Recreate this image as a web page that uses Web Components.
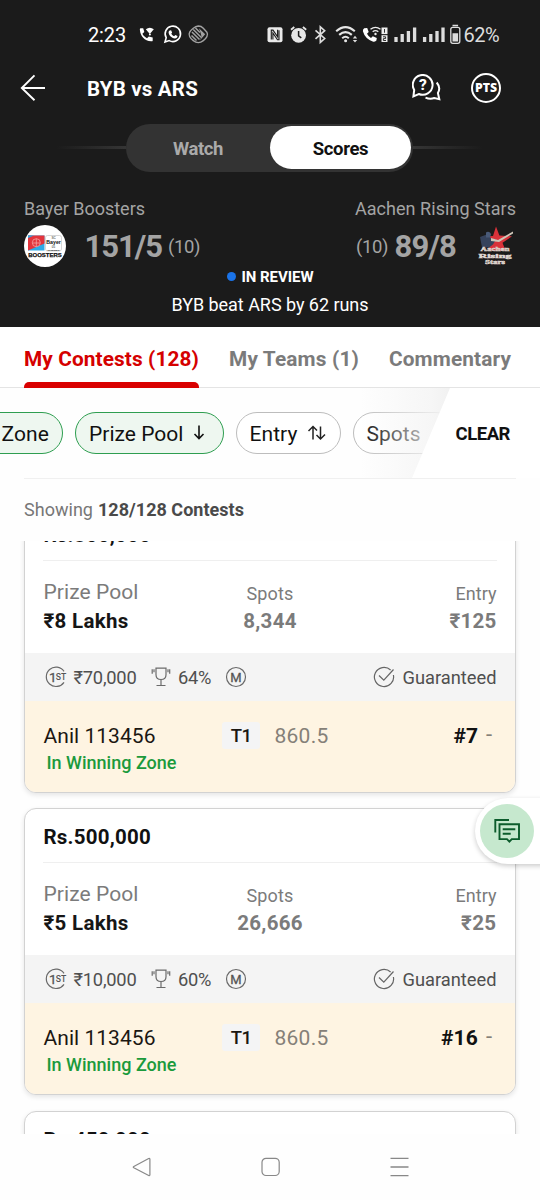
<!DOCTYPE html>
<html lang="en">
<head>
<meta charset="utf-8">
<title>BYB vs ARS</title>
<style>
html,body{margin:0;background:#fff}
body{width:540px;height:1200px;overflow:hidden;font-family:Roboto,"Liberation Sans",sans-serif;color:#111}
</style>
</head>
<body>
<contest-screen></contest-screen>

<template id="screen">
<style>
:host{display:flex;flex-direction:column;width:540px;height:1200px;position:relative;overflow:hidden;background:#fefefe}
.dark{background:#1b1b1b;height:327px;flex:none}
</style>
<div class="dark">
<status-bar></status-bar>
<match-header></match-header>
<view-toggle></view-toggle>
<match-score></match-score>
</div>
<tab-row></tab-row>
<filter-row></filter-row>
<contest-list></contest-list>
<system-nav></system-nav>
<chat-fab></chat-fab>
</template>

<template id="status">
<style>
:host{display:flex;align-items:center;height:60px;padding:10px 0 0 88px;box-sizing:border-box;color:#fff}
svg{display:block;flex:none}
</style>
<fit-text w="38" style="font-size:20px">2:23</fit-text>
<svg width="370" height="34" viewBox="132 18 370 34" style="margin-left:6px;margin-right:-40px">
<g fill="#fff">
<path d="M140.500 28.300h2.700l1.100 3.800-1.900 1.700c1 2 2.500 3.500 4.600 4.400l1.800-1.800 3.900 1v3.300c-.2.6-.7.7-1.600.6-6.600-.5-10.700-5-11.200-11.300-.1-1 .1-1.500.6-1.700z"/>
<path d="M145.800 29.300q4-3.200 8 0l-4 4.800z"/><circle cx="149.900" cy="34.500" r="1"/>
</g>
<path d="M165 42l1.200-4.300a7.700 7.700 0 1 1 3 2.900z" fill="none" stroke="#fff" stroke-width="1.600"/>
<path d="M169.600 30.400l1.500-.2 1 2.300-.8 1.200c.7 1.200 1.600 1.900 2.800 2.500l1.200-1.200 2.200 1.100c0 1.600-1 2.500-2.600 2.500-3.400-.4-6.500-3.600-6.300-6.500.1-.8.4-1.400 1-1.700z" fill="#fff"/>
<g fill="none" stroke="#a2a2a2"><path d="M198.300 26q3 0 5 2.200t3.600 4q1.200 2.200 0 4.400t-3.600 4q-2.500 2-5 2t-5-2-3.600-4q-1.200-2.200 0-4.400t3.600-4 5-2.200z" stroke-width="1.400"/>
<path d="M192 32l7.500 7.500M193.300 29.500l8 8M195.500 28l4.500 4.500M191.500 35.500l5 5" stroke-width="1.500"/><path d="M199 28.300l6.200 6-5.200 6 1.500-3.800-1-4z" fill="#a2a2a2" stroke="none"/></g>
<path d="M269.500 27.200h11a2 2 0 0 1 2 2v11a2 2 0 0 1-2 2h-11a2 2 0 0 1-2-2v-11a2 2 0 0 1 2-2z" fill="#eaeaea"/>
<path d="M271.300 39.500v-9.400h1.700l4.600 6.700v-7M279 30.300v9.400h-1.500l-4.600-6.700v6.500" fill="none" stroke="#1b1b1b" stroke-width="1.100"/>
<circle cx="298.600" cy="35.300" r="7.400" fill="#e6e6e6"/><path d="M298.600 31v4.800l2.700 2" stroke="#1b1b1b" stroke-width="1.500" fill="none"/><path d="M291 29.800l3.300-2.800M306.200 29.800l-3.300-2.800" stroke="#e6e6e6" stroke-width="1.800"/>
<path d="M315.500 30.300l9.200 8.200-4.400 3.900v-15.600l4.400 3.900-9.200 8.200" fill="none" stroke="#ddd" stroke-width="1.600"/>
<g fill="none" stroke="#e6e6e6" stroke-width="2.100"><path d="M336.200 31.200q9.300-8.300 18.600 0"/><path d="M339.200 34.900q6.300-5.600 12.600 0"/><path d="M342.200 38.200q3.300-2.900 6.600 0"/></g><circle cx="345.600" cy="40.800" r="1.500" fill="#e6e6e6"/><path d="M352.800 38.500l2.200-2.700 2.200 2.700zM352.800 39.900l2.200 2.600 2.200-2.600z" fill="#ddd"/>
<path d="M364.200 28.200l3-.3 1.500 4.100-1.700 1.700q1.400 2.700 4 4.200l1.800-1.700 4 1.700-.4 2.700q-1 1.500-3.700.9-7.600-2.600-9.800-10.200-.2-2.200 1.300-3.100z" fill="#fff"/>
<g fill="none" stroke="#eee" stroke-width="1.400"><path d="M370.500 29.300q5-3.800 10 0M372.700 31.700q2.800-2.200 5.600 0"/></g><circle cx="375.500" cy="34" r="1.200" fill="#eee"/>
<rect x="381.500" y="27.500" width="6" height="6.600" fill="#eee"/><rect x="381.500" y="35.200" width="6" height="6.800" fill="#eee"/><path d="M384.500 29v3.700M383 36.800h2.600v1.800h-2.200v1.900h2.600" fill="none" stroke="#1b1b1b" stroke-width=".9"/>
<path d="M396 42v-5M402.200 42v-8M408.400 42v-11M414.600 42v-14.500M424.600 42v-5M430.800 42v-8M437 42v-11M443 42v-14.500" stroke="#ddd" stroke-width="3.300"/>
<rect x="450.800" y="27.300" width="9" height="16" rx="2" fill="none" stroke="#ddd" stroke-width="1.300"/><path d="M452.500 24.700h5.600v1.600h-5.600zM452.500 33.300h5.600v8.300h-5.600z" fill="#ddd"/>
</svg>
<fit-text w="35.500" style="font-size:20px;color:#ddd;margin-left:1.500px">62%</fit-text>
</template>

<template id="header">
<style>
:host{display:flex;align-items:center;height:56px;padding:0 38px 0 20px;color:#fff}
svg{display:block;flex:none}
fit-text{margin:1px 0 0 41px;flex:1}
</style>
<svg width="26" height="28" viewBox="0 0 26 28" fill="none" stroke="#fff" stroke-width="1.900"><path d="M25 14H2M14.500 1.300L1.800 14l12.700 12.300"/></svg>
<fit-text w="111" style="font-size:20.500px;font-weight:700">BYB vs ARS</fit-text>
<svg width="30" height="28" viewBox="412.500 74 30 28" fill="none" stroke="#fff" stroke-width="2"><path d="M414.700 90A9.900 9.900 0 1 1 419.300 94L413.900 96.300z"/><path d="M437.200 82.500q4.400 5.300 1.200 10.500l1.400 6.200-5-1.200q-4.300 1.600-8.800-.4" /><text x="423.400" y="90.200" text-anchor="middle" font-size="15.500" font-weight="800" fill="#fff" stroke="none">?</text></svg>
<svg width="32" height="32" viewBox="0 0 32 32" style="margin-left:28px"><circle cx="16" cy="16" r="14" fill="none" stroke="#fff" stroke-width="2"/><text x="16" y="20.300" text-anchor="middle" font-family="Open Sans,sans-serif" font-size="12" font-weight="800" fill="#fff" textLength="22" lengthAdjust="spacingAndGlyphs">PTS</text></svg>
</template>

<template id="toggle">
<style>
:host{display:flex;align-items:center;height:48px;padding:0 56px;margin-top:7.500px}
i{height:3px;width:70px;background:linear-gradient(90deg,#1b1b1b,#353535)}
i:last-child{transform:scaleX(-1)}
.pill{display:flex;width:287px;height:48px;box-sizing:border-box;border-radius:24px;background:#333;padding:2.500px;flex:none}
.pill div{flex:1;display:flex;align-items:center;justify-content:center;color:#aaa;border-radius:22px;font-size:18.500px;padding-top:2px;box-sizing:border-box}
.pill .on{background:#fff;color:#111}
</style>
<i></i><div class="pill"><div><fit-text w="50" style="font-weight:700;margin-right:2px">Watch</fit-text></div><div class="on"><fit-text w="55.500" style="font-weight:700;margin-left:1px">Scores</fit-text></div></div><i></i>
</template>

<template id="score">
<style>
:host{display:block;color:#a4a4a4;padding:26px 24px 0}
.row{display:flex;justify-content:space-between;align-items:center}
.names{height:22px;font-size:18px}
.pts{height:42px;margin-top:5px}
.side{display:flex;align-items:center}
.big{font-size:31px;font-weight:700;margin-top:2px}
.small{font-size:18.500px;margin-top:3px}
svg{display:block;flex:none}
.rev{display:flex;align-items:center;justify-content:center;height:20px;color:#fff;font-size:15px;font-weight:700}
.rev i{width:9px;height:9px;border-radius:50%;background:#1a73e8;margin-right:6px}
.res{display:flex;justify-content:center;color:#fff;font-size:18px;line-height:20px;margin-top:8px}
</style>
<div class="row names"><fit-text w="121">Bayer Boosters</fit-text><fit-text w="161">Aachen Rising Stars</fit-text></div>
<div class="row pts">
<div class="side">
<svg width="42" height="42" viewBox="0 0 42 42"><circle cx="21" cy="21" r="21" fill="#fff"/><path d="M4 10.500h16.500v15H4z" fill="#2ea9e6"/><path d="M4 10.500h16.500v8L4 25.500z" fill="#e3343c"/><path d="M4 10.500h6L4 13z" fill="#2ea9e6"/><g fill="none" stroke="#f6b0b0" stroke-width=".7"><circle cx="12.300" cy="17.700" r="4"/><path d="M12.300 13.700v8M8.500 18h7.600"/></g><rect x="21.500" y="10.500" width="16" height="15.500" rx="2" fill="#fff" stroke="#bbb" stroke-width=".6"/><g font-family="Liberation Sans,sans-serif" fill="#111" text-anchor="middle"><text x="29.500" y="14" font-size="3">SC</text><text x="29.600" y="19.200" font-size="4.900" font-weight="700" textLength="14.500" lengthAdjust="spacingAndGlyphs">Bayer</text><text x="29.500" y="23" font-size="3">05</text><text x="29.500" y="25.900" font-size="2.400" font-weight="700">Uerdingen</text><text x="21" y="32" font-size="5.800" font-weight="700" stroke="#111" stroke-width=".25" textLength="33.500" lengthAdjust="spacingAndGlyphs">BOOSTERS</text></g></svg>
<fit-text class="big" w="77.500" style="margin-left:18.500px">151/5</fit-text><fit-text class="small" w="32" style="margin-left:6px">(10)</fit-text>
</div>
<div class="side">
<fit-text class="small" w="32">(10)</fit-text><fit-text class="big" w="61.500" style="margin-left:6.500px">89/8</fit-text>
<svg width="38" height="42" viewBox="0 0 38 42" style="margin-left:21px;margin-right:1px"><path d="M19 1.500l3.400 9 12.600.8-9.500 6.500 3 7.700H11.500l2.500-8-9-6 11-.6z" fill="#d9323a"/><path d="M3 12l8-3 3 4.500 5 1-3 5-4 3H5z" fill="#36435c"/><path d="M14 13l7 2 15-8.500v2L22 17l-8-1z" fill="#cfc6b8"/><path d="M9 7.500a3 3 0 0 1 5 2l-1 3h-4z" fill="#495a78"/><g font-family="Liberation Serif,serif" font-weight="700" text-anchor="middle" fill="#bfb3a7" stroke="#e6ded8" stroke-width=".4"><text x="18" y="25.500" font-size="6.700" textLength="29" lengthAdjust="spacingAndGlyphs">Aachen</text><text x="18" y="33" font-size="6.600" textLength="33" lengthAdjust="spacingAndGlyphs" fill="#ddd4cd">Rising</text><text x="18" y="39.400" font-size="5.400" textLength="20" lengthAdjust="spacingAndGlyphs">Stars</text></g></svg>
</div>
</div>
<div class="rev"><i></i><fit-text w="72">IN REVIEW</fit-text></div>
<div class="res"><fit-text w="197">BYB beat ARS by 62 runs</fit-text></div>
</template>

<template id="tabs">
<style>
:host{display:flex;flex:none;height:61px;box-sizing:border-box;border-bottom:1px solid #e4e4e4;padding:0 24px;gap:30px;background:#fff;font-size:20.800px;font-weight:700;color:#7b7b7b;align-items:stretch}
div{display:flex;align-items:center;height:61px;position:relative}
fit-text{margin-top:2px}
.on{color:#d50000}
.on::after{content:"";position:absolute;left:0;right:0;bottom:0;height:6.500px;background:#d90000;border-radius:5px 5px 0 0}
</style>
<div class="on"><fit-text w="175">My Contests (128)</fit-text></div><div><fit-text w="130">My Teams (1)</fit-text></div><div><fit-text w="122">Commentary</fit-text></div>
</template>

<template id="filters">
<style>
:host{display:block;flex:none;height:153px;position:relative;background:#fefefe}
.chips{display:flex;align-items:center;gap:12px;height:89px;margin-left:-44px;overflow:hidden;font-size:21px}
.chip{display:flex;align-items:center;height:42px;box-sizing:border-box;border:1.500px solid #bdbdbd;border-radius:21px;background:#fff;flex:none;padding:2px 13px 0}
.chip.on{background:#eef7f0;border-color:#2e9e50}
svg{display:block;flex:none;margin-top:-2px}
.clear{position:absolute;top:0;left:410px;width:130px;height:90px;display:flex;align-items:center;background:#fff;clip-path:polygon(40px 0,100% 0,100% 100%,2px 100%);padding:1px 0 0 45.500px;box-sizing:border-box;font-size:18.500px;font-weight:700}
.fade{position:absolute;top:0;left:360px;width:95px;height:90px;background:linear-gradient(90deg,rgba(252,252,252,0),rgba(244,244,244,.8) 75%,#f0f0f0)}
.line{position:absolute;left:24px;right:24px;top:90px;height:1px;background:#f0f0f0}
.show{display:flex;padding:23px 24px 0;font-size:18px;line-height:20px;color:#777}
.show b{color:#4a4a4a;margin-left:5px}
</style>
<div class="chips">
<div class="chip on" style="width:107px;justify-content:flex-end"><fit-text w="47.500">Zone</fit-text></div>
<div class="chip on" style="width:148.500px"><fit-text w="94.500">Prize Pool</fit-text><svg width="12" height="15" viewBox="0 0 12 15" style="margin-left:9.500px" fill="none" stroke="#111" stroke-width="1.600"><path d="M6 .5v13M1.500 9L6 13.600 10.500 9"/></svg></div>
<div class="chip" style="width:105px"><fit-text w="48">Entry</fit-text><svg width="20" height="16" viewBox="0 0 20 16" style="margin-left:9px" fill="none" stroke="#222" stroke-width="1.500"><path d="M6 14.500V2M1.500 6L6 1.500 10 5.500M13.500 1.500V14M9.500 10l4 4 4.500-4.500" /></svg></div>
<div class="chip" style="width:104px"><fit-text w="54">Spots</fit-text></div>
</div>
<div class="fade"></div>
<div class="clear"><fit-text w="54.500">CLEAR</fit-text></div>
<div class="line"></div>
<div class="show"><fit-text w="69">Showing</fit-text><b><fit-text w="146">128/128 Contests</fit-text></b></div>
</template>

<template id="list">
<style>
:host{display:block;flex:none;height:593px;overflow:hidden;background:#fefefe}
.in{display:flex;flex-direction:column;gap:16px;padding:0 24px;margin-top:-35px}
.in>:first-child{margin-bottom:-1px}
</style>
<div class="in">
<contest-card title-text="Rs.800,000" pool="₹8 Lakhs" pool-w="85" spots="8,344" spots-w="53.500" entry="₹125" entry-w="47" first="₹70,000" win="64%" rank="#7" rank-w="24.500"></contest-card>
<contest-card title-text="Rs.500,000" pool="₹5 Lakhs" pool-w="85" spots="26,666" spots-w="65.500" entry="₹25" entry-w="35.500" first="₹10,000" win="60%" rank="#16" rank-w="37"></contest-card>
<contest-card title-text="Rs.450,000"></contest-card>
</div>
</template>

<template id="nav">
<style>
:host{display:flex;flex:none;height:66px;align-items:center;justify-content:space-between;padding:0 131px;background:#fefefe}
svg{display:block}
</style>
<svg width="20" height="20" viewBox="0 0 20 20" fill="none" stroke="#888" stroke-width="1.200" stroke-linejoin="round"><path d="M17.700 1.500q1.200-.4 1.200.8v15.500q0 1.200-1.200.7L2.800 10.800q-1.100-.7 0-1.300z"/></svg>
<svg width="20" height="20" viewBox="0 0 20 20" fill="none" stroke="#888" stroke-width="1.200"><rect x="2" y="1.300" width="17.200" height="17.200" rx="4"/></svg>
<svg width="20" height="20" viewBox="0 0 20 20" fill="none" stroke="#888" stroke-width="1.300"><path d="M1.500 1.300h18M1.500 10h18M1.500 18.600h18"/></svg>
</template>

<template id="fab">
<style>
:host{display:flex;position:absolute;left:475px;top:798px;width:70px;height:66px;box-sizing:border-box;background:#fff;border-radius:33px 0 0 33px;box-shadow:0 2px 5px rgba(0,0,0,.2);align-items:center;padding-left:5px}
div{width:54px;height:54px;border-radius:50%;background:#c6e8ce;display:flex;align-items:center;justify-content:center}
svg{display:block}
</style>
<div><svg width="28" height="28" viewBox="493 817 28 28" fill="none" stroke="#0c5c2c" stroke-width="1.900"><path d="M495.300 832.500V820h13.700M499.500 824.300h19.500v14.800h-7.200l-2.400 2.600-2.400-2.600h-7.500zM502.700 829.300h12.600M502.700 833.700h8"/></svg></div>
</template>

<script>
class FitText extends HTMLElement{
  constructor(){super();this.attachShadow({mode:"open"}).innerHTML='<style>:host{display:block;white-space:nowrap;flex:none}span{display:inline-block}</style><span><slot></slot></span>'}
  connectedCallback(){
    const s=this.shadowRoot.querySelector("span"),w=parseFloat(this.getAttribute("w")),n=this.textContent.length;
    if(!w||!n)return;
    const gap=(w-s.getBoundingClientRect().width)/n;
    s.style.letterSpacing=gap.toFixed(3)+"px";
  }
}
class ContestCard extends HTMLElement{
  connectedCallback(){
    if(this.shadowRoot)return;
    const a=k=>this.getAttribute(k)||"";
    const body=!a("pool")?"":`
<div class="info"><div><fit-text w="95">Prize Pool</fit-text><fit-text w="${a("pool-w")}">${a("pool")}</fit-text></div>
<div><fit-text w="47">Spots</fit-text><fit-text w="${a("spots-w")}">${a("spots")}</fit-text></div>
<div><fit-text w="41">Entry</fit-text><fit-text w="${a("entry-w")}">${a("entry")}</fit-text></div></div>
<div class="strip">
<svg width="22" height="22" viewBox="0 0 22 22"><path d="M19 5.300A9.700 9.700 0 1 0 19 16.300" fill="none" stroke="#6a6a6a" stroke-width="1.200"/><text x="4" y="15.800" font-size="13.500" fill="#555" stroke="#555" stroke-width=".3">1</text><text x="10.800" y="14.200" font-size="9" font-weight="500" fill="#555" textLength="10.500" lengthAdjust="spacingAndGlyphs">ST</text></svg>
<fit-text w="63" style="margin-left:6.500px">${a("first")}</fit-text>
<svg width="20" height="20" viewBox="0 0 20 20" style="margin-left:14px" fill="none" stroke="#6a6a6a" stroke-width="1.200"><path d="M5 1.200h10v6.500q0 4.800-5 4.800t-5-4.800zM10 12.500v5.700M5.500 18.500h9M1.200 2.200v4.600M18.700 2.200v4.600M3 2.200v3M17 2.200v3"/></svg>
<fit-text w="33" style="margin-left:7.500px">${a("win")}</fit-text>
<svg width="22" height="22" viewBox="0 0 22 22" style="margin-left:13.500px"><circle cx="11" cy="11" r="9.500" fill="none" stroke="#6a6a6a" stroke-width="1.200"/><text x="11" y="15.700" font-size="13" text-anchor="middle" fill="#555" stroke="#555" stroke-width=".3">M</text></svg>
<span class="grow"></span>
<svg width="22" height="22" viewBox="0 0 22 22" fill="none" stroke="#666" stroke-width="1.200"><path d="M17.600 4A9.600 9.600 0 1 0 20.400 9M6 9.500l4.800 4.700L20.500 3.500"/></svg>
<fit-text w="94" style="margin-left:7px">Guaranteed</fit-text></div>
<div class="me"><div class="row"><fit-text w="112" style="width:178.500px">Anil 113456</fit-text><span class="tag"><fit-text w="20.500">T1</fit-text></span><fit-text w="54" style="margin-left:14.500px;color:#858078;margin-top:-1px">860.5</fit-text><span class="grow"></span><fit-text w="${a("rank-w")}" style="font-weight:700;color:#111">${a("rank")}</fit-text><fit-text w="9" style="margin:-4px 2px 0 8px;color:#858078;font-size:22px">-</fit-text></div>
<div class="zone"><fit-text w="130">In Winning Zone</fit-text></div></div>`;
    this.attachShadow({mode:"open"}).innerHTML=`<style>
:host{display:block;height:287px;box-sizing:border-box;border:1.500px solid #d2d2d2;border-radius:12px;background:#fff;overflow:hidden;box-shadow:0 2px 5px rgba(0,0,0,.10)}
.t{height:54px;margin:0 18px;border-bottom:1px solid #efefef;display:flex;align-items:center;padding:3px 0 0 .5px;box-sizing:border-box;font-size:20.500px;font-weight:700}
.info{display:grid;grid-template-columns:1fr 1fr 1fr;height:92px;padding:17px 18.500px 0 18.500px;box-sizing:border-box;color:#7b7b7b}
.info div{display:flex;flex-direction:column;font-size:18px}
.info div>*{height:29px;line-height:29px}
.info div>:first-child{padding-top:1px;height:28px}
.info div>:last-child{font-size:20.500px;font-weight:700;margin-top:-.5px}
.info div:first-child{font-size:21px}
.info div:first-child>:first-child{padding-top:0;height:29px}
.info div:first-child>:last-child{color:#161616}
.info div:nth-child(2){align-items:center}.info div:nth-child(3){align-items:flex-end}
.strip{display:flex;align-items:center;height:48px;background:#f4f4f4;padding:1.500px 18.500px 0 20px;box-sizing:border-box;color:#4f4f4f;font-size:18.300px}
.strip svg{display:block;flex:none;margin-top:-1px}
.grow{flex:1}
.me{background:#fef4e2;height:95px;padding:22px 18px 0 18.500px;box-sizing:border-box}
.row{display:flex;align-items:center;height:26px;font-size:21px;color:#1b1712}
.tag{background:#f4f4f5;width:38px;height:27px;margin-top:-1px;padding-top:1px;box-sizing:border-box;display:flex;align-items:center;justify-content:center;font-size:18.500px;font-weight:500;border-radius:3px}
.zone{color:#1b9a3c;font-size:18px;font-weight:500;line-height:20px;margin:4px 0 0 3px}
</style>
<div class="t"><fit-text w="107.500">${a("title-text")}</fit-text></div>${body}`;
  }
}
const part=(tag,id)=>customElements.define(tag,class extends HTMLElement{
  constructor(){super();this.attachShadow({mode:"open"}).append(document.getElementById(id).content.cloneNode(true))}
});
customElements.define("contest-card",ContestCard);
part("status-bar","status");
part("match-header","header");
part("view-toggle","toggle");
part("match-score","score");
part("tab-row","tabs");
part("filter-row","filters");
part("contest-list","list");
part("system-nav","nav");
part("chat-fab","fab");
part("contest-screen","screen");
customElements.define("fit-text",FitText);
</script>
</body>
</html>
